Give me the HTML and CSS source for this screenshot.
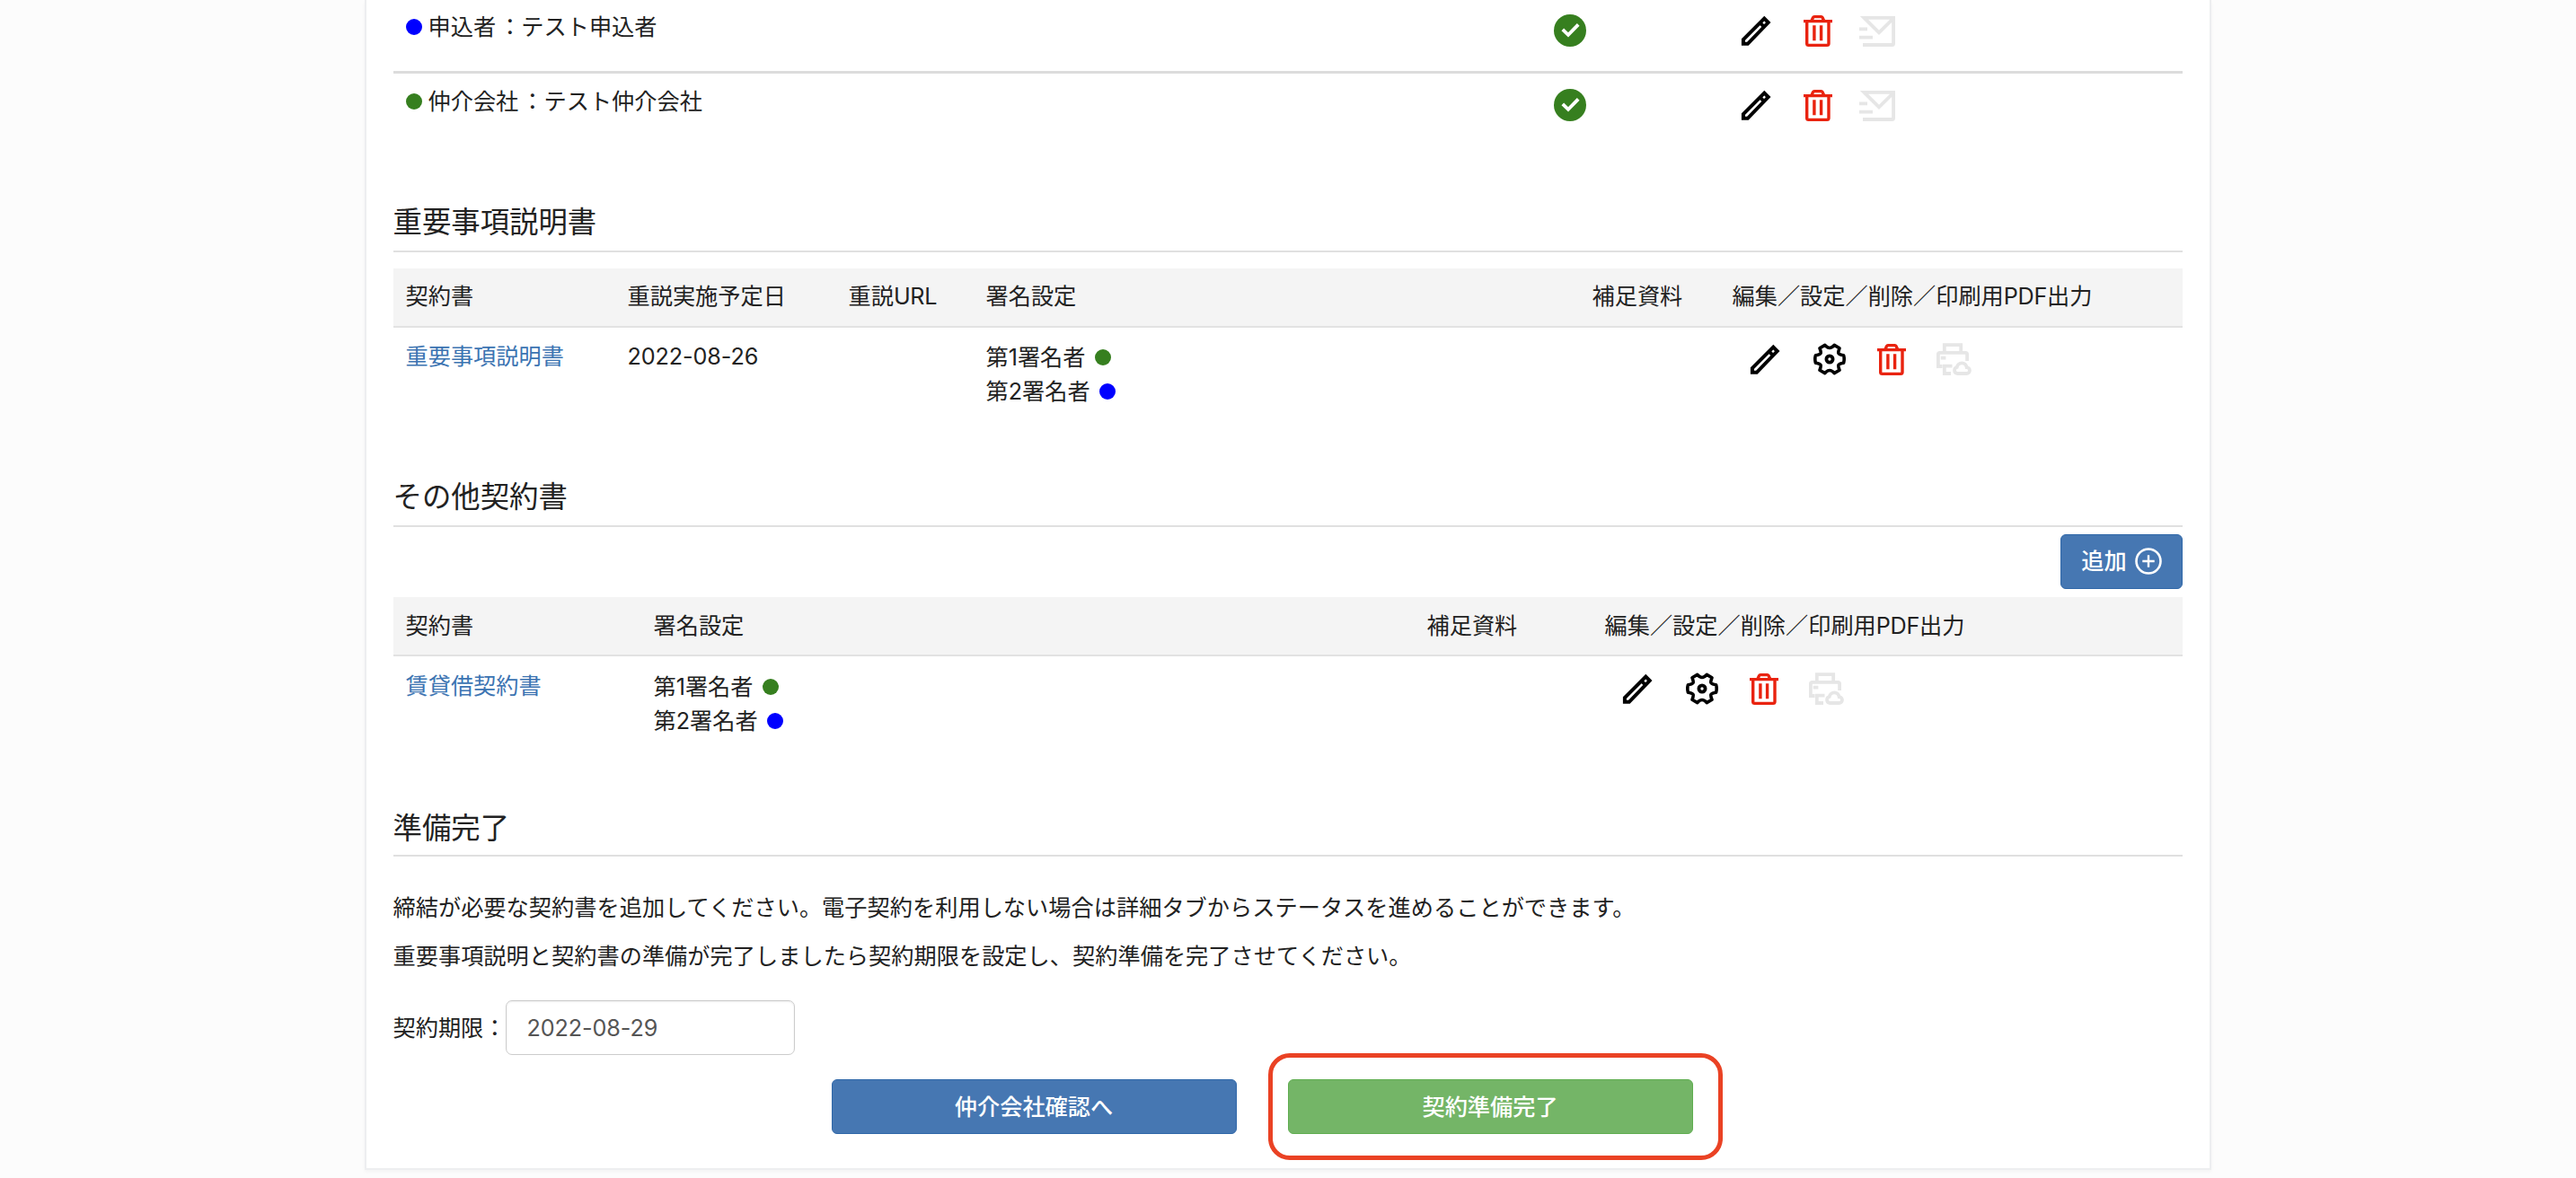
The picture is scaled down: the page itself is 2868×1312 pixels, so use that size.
FILE: index.html
```html
<!DOCTYPE html>
<html lang="ja">
<head>
  <meta charset="UTF-8">
  <meta name="viewport" content="width=device-width, initial-scale=1.0">
  <title>契約準備</title>
  <link rel="stylesheet" href="styles.css">
</head>
<body>
  <svg class="icon-defs" xmlns="http://www.w3.org/2000/svg">
    <symbol id="icon-check" viewBox="0 0 36 36">
      <circle cx="18" cy="18" r="18" fill="#367f1f"/>
      <path d="M9.8 16.8l6.2 6L27.2 11.4" fill="none" stroke="#fff" stroke-width="3.8"/>
    </symbol>
    <symbol id="icon-pencil" viewBox="0 0 40 40">
      <path d="M5.9 34.8V30L29.3 6.7l4.4 4.4L10.8 34.8zM24.6 11.4l4.4 4.4" fill="none" stroke="currentColor" stroke-width="4"/>
    </symbol>
    <symbol id="icon-gear" viewBox="0 0 40 40">
      <path d="M35.6 24.2C28.5 25.5 29 26.5 31 32.3L25.2 35.6Q20 29.4 14.8 35.6L9 32.3C11 26.5 11.5 25.5 4.4 24.2Q3.2 20 4.4 15.8C11.5 14.5 11 13.5 9 7.7L14.8 4.4Q20 10.6 25.2 4.4L31 7.7C29 13.5 28.5 14.5 35.6 15.8Q36.8 20 35.6 24.2z" fill="none" stroke="currentColor" stroke-width="3.6" stroke-linejoin="round"/>
      <circle cx="20" cy="20" r="3.6" fill="none" stroke="currentColor" stroke-width="3.8"/>
    </symbol>
    <symbol id="icon-trash" viewBox="0 0 40 40">
      <path d="M4 9.6h32M13 9l1.6-3.6q.4-.8 1.4-.8h7.6q1 0 1.4.8L26.6 9M7.7 10v24.5q0 1.9 1.9 1.9h20.5q1.9 0 1.9-1.9V10M15.9 14.3v17M23.6 14.3v17" fill="none" stroke="currentColor" stroke-width="3.4"/>
    </symbol>
    <symbol id="icon-mail" viewBox="0 0 40 40">
      <path d="M4 36h32.5q1.6 0 1.6-1.6V5.9H5.4L22 22.4 38 6.5M0 18.4h9M0 27.6h15" fill="none" stroke="currentColor" stroke-width="3.8"/>
    </symbol>
    <symbol id="icon-printer" viewBox="0 0 40 40">
      <path d="M9.8 12V4.2h18.4V12M7.5 28H2.9V14.6q0-1.8 1.8-1.8h28.6q1.8 0 1.8 1.8V22M18.5 27.7H9.8V36h7.2M5.8 18.6h5.6" fill="none" stroke="currentColor" stroke-width="3.8"/>
      <path d="M24 36h10.4a3.4 3.4 0 0 0 .3-6.8 5.6 5.9 0 0 0-11-.2 3.6 3.6 0 0 0 .3 7z" fill="none" stroke="currentColor" stroke-width="3.8"/>
    </symbol>
    <symbol id="icon-plus" viewBox="0 0 30 30">
      <circle cx="15" cy="15" r="13.5" fill="none" stroke="currentColor" stroke-width="2.6"/>
      <path d="M15 8.3v13.4M8.3 15h13.4" fill="none" stroke="currentColor" stroke-width="2.4"/>
    </symbol>
  </svg>

  <main class="panel">
    <div class="party">
      <div class="party-name"><span class="dot blue"></span>申込者 ：テスト申込者</div>
      <svg class="check"><use href="#icon-check"/></svg>
      <div class="actions">
        <svg class="icon"><use href="#icon-pencil"/></svg>
        <svg class="icon trash"><use href="#icon-trash"/></svg>
        <svg class="icon mail"><use href="#icon-mail"/></svg>
      </div>
    </div>
    <div class="party last">
      <div class="party-name"><span class="dot green"></span>仲介会社 ：テスト仲介会社</div>
      <svg class="check"><use href="#icon-check"/></svg>
      <div class="actions">
        <svg class="icon"><use href="#icon-pencil"/></svg>
        <svg class="icon trash"><use href="#icon-trash"/></svg>
        <svg class="icon mail"><use href="#icon-mail"/></svg>
      </div>
    </div>

    <section class="important">
      <h2>重要事項説明書</h2>
      <div class="contract-head">
        <div>契約書</div>
        <div>重説実施予定日</div>
        <div>重説<span class="latin">URL</span></div>
        <div>署名設定</div>
        <div>補足資料</div>
        <div>編集／設定／削除／印刷用<span class="latin">PDF</span>出力</div>
      </div>
      <div class="contract-row">
        <div><a class="link">重要事項説明書</a></div>
        <div class="date">2022-08-26</div>
        <div></div>
        <div class="signers">
          <div>第1署名者<span class="dot green"></span></div>
          <div>第2署名者<span class="dot blue"></span></div>
        </div>
        <div></div>
        <div class="actions">
          <svg class="icon"><use href="#icon-pencil"/></svg>
          <svg class="icon gear"><use href="#icon-gear"/></svg>
          <svg class="icon trash"><use href="#icon-trash"/></svg>
          <svg class="icon printer"><use href="#icon-printer"/></svg>
        </div>
      </div>
    </section>

    <section class="other">
      <h2>その他契約書</h2>
      <div class="toolbar">
        <button type="button" class="btn add">追加<svg class="plus"><use href="#icon-plus"/></svg></button>
      </div>
      <div class="contract-head">
        <div>契約書</div>
        <div>署名設定</div>
        <div>補足資料</div>
        <div>編集／設定／削除／印刷用<span class="latin">PDF</span>出力</div>
      </div>
      <div class="contract-row">
        <div><a class="link">賃貸借契約書</a></div>
        <div class="signers">
          <div>第1署名者<span class="dot green"></span></div>
          <div>第2署名者<span class="dot blue"></span></div>
        </div>
        <div></div>
        <div class="actions">
          <svg class="icon"><use href="#icon-pencil"/></svg>
          <svg class="icon gear"><use href="#icon-gear"/></svg>
          <svg class="icon trash"><use href="#icon-trash"/></svg>
          <svg class="icon printer"><use href="#icon-printer"/></svg>
        </div>
      </div>
    </section>

    <section class="finish">
      <h2>準備完了</h2>
      <p>締結が必要な契約書を追加してください。電子契約を利用しない場合は詳細タブからステータスを進めることができます。</p>
      <p>重要事項説明と契約書の準備が完了しましたら契約期限を設定し、契約準備を完了させてください。</p>
      <div class="deadline">
        <label for="deadline">契約期限：</label>
        <input type="text" id="deadline" name="deadline" value="2022-08-29" autocomplete="off">
      </div>
      <div class="submit-buttons">
        <button type="button" class="btn">仲介会社確認へ</button>
        <div class="highlight">
          <button type="button" class="btn success">契約準備完了</button>
        </div>
      </div>
    </section>
  </main>
</body>
</html>
```

FILE: styles.css
```css
* {
  box-sizing: border-box;
}

body {
  margin: 0;
  height: 1312px;
  overflow: hidden;
  background: #fcfcfc;
  color: #222;
  font-family: Inter, "Noto Sans CJK JP", sans-serif;
  font-size: 25.2px;
  line-height: 38px;
}

.icon-defs {
  display: none;
}

.panel {
  width: 2056px;
  height: 1303px;
  margin-left: 406px;
  padding: 0 30px 0 29.5px;
  background: #fff;
  border: 2px solid #edeef0;
  border-top: none;
  box-shadow: 0 2px 4px rgba(0, 0, 0, 0.04);
}

/* Parties */
.party {
  display: grid;
  grid-template-columns: 1292px 205px 1fr;
  height: 82px;
  padding-top: 11px;
  border-bottom: 3px solid #dcdcdc;
}

.party.last {
  height: 144px;
  padding-top: 12px;
  border-bottom: none;
}

.party-name {
  padding-left: 14px;
  word-spacing: -4px;
}

.party-name .dot {
  margin-right: 7px;
}

.dot {
  display: inline-block;
  width: 18px;
  height: 18px;
  border-radius: 50%;
}

.dot.blue {
  background: #00f;
}

.dot.green {
  background: #367f1f;
}

.check {
  width: 36px;
  height: 36px;
  margin-top: 5px;
}

.actions {
  display: flex;
  gap: 29px;
  padding-top: 3px;
  color: #000;
}

.icon {
  flex: none;
  width: 40px;
  height: 40px;
}

.icon.trash {
  color: #e9230f;
}

.icon.mail {
  margin-left: -3px;
  color: #e6e6e6;
}

.icon.gear {
  margin-left: 3px;
}

.icon.printer {
  color: #e6e6e6;
}

/* Sections */
h2 {
  height: 55px;
  margin: 0;
  padding-top: 2px;
  border-bottom: 2px solid #e0e0e0;
  font-size: 32.4px;
  font-weight: 400;
  line-height: 40px;
}

.contract-head,
.contract-row {
  display: grid;
  padding-left: 14px;
}

.important .contract-head,
.important .contract-row {
  grid-template-columns: 247px 246px 153px 675px 156px 1fr;
}

.other .contract-head,
.other .contract-row {
  grid-template-columns: 276px 861px 198px 1fr;
}

.contract-head {
  height: 66px;
  background: #f4f4f4;
  border-bottom: 2px solid #e2e2e2;
  line-height: 63px;
}

.other .contract-head {
  line-height: 65px;
}

.contract-row {
  padding-top: 13px;
}

.other .contract-row {
  padding-top: 14px;
}

.contract-row .actions {
  padding-top: 2px;
  padding-left: 16px;
}

.date {
  letter-spacing: -0.1px;
}

.latin {
  letter-spacing: -0.3px;
}

.link {
  color: #3c74b2;
}

.signers {
  padding-top: 1px;
}

.signers .dot {
  margin-left: 10px;
}

.important {
  height: 306px;
}

.important .contract-head {
  margin-top: 18px;
}

.other {
  height: 367px;
}

.toolbar {
  display: flex;
  justify-content: flex-end;
  height: 78px;
  padding-top: 8px;
}

.btn {
  display: flex;
  align-items: center;
  justify-content: center;
  width: 451px;
  height: 61px;
  padding: 0;
  background: #4677b2;
  border: 1px solid #2f67a8;
  border-radius: 6px;
  color: #fff;
  font: inherit;
  font-weight: 500;
}

.btn.add {
  gap: 9px;
  width: 136px;
  padding-bottom: 1px;
}

.plus {
  width: 30px;
  height: 30px;
}

.btn.success {
  background: #74b567;
  border-color: #5fad50;
}

/* Completion form */
.finish h2 {
  padding-top: 4px;
}

.finish p {
  margin: 0;
  padding-top: 16px;
  letter-spacing: 0.03px;
}

.finish h2 + p {
  padding-top: 38px;
}

.deadline {
  display: flex;
  align-items: center;
  height: 61px;
  margin-top: 30px;
}

.deadline input {
  width: 322px;
  height: 61px;
  padding: 0 22px;
  background: #fff;
  border: 1px solid #ccc;
  border-radius: 7px;
  box-shadow: inset 0 1px 2px rgba(0, 0, 0, 0.08);
  color: #555;
  font: inherit;
  letter-spacing: -0.1px;
}

.submit-buttons {
  display: flex;
  align-items: center;
  gap: 35px;
  margin-top: -2px;
  padding-left: 488px;
}

/* Red frame around the final button */
.highlight {
  display: flex;
  width: 506px;
  height: 119px;
  padding: 24px 0 0 17px;
  border: 5px solid #ea4224;
  border-radius: 24px;
}
```
